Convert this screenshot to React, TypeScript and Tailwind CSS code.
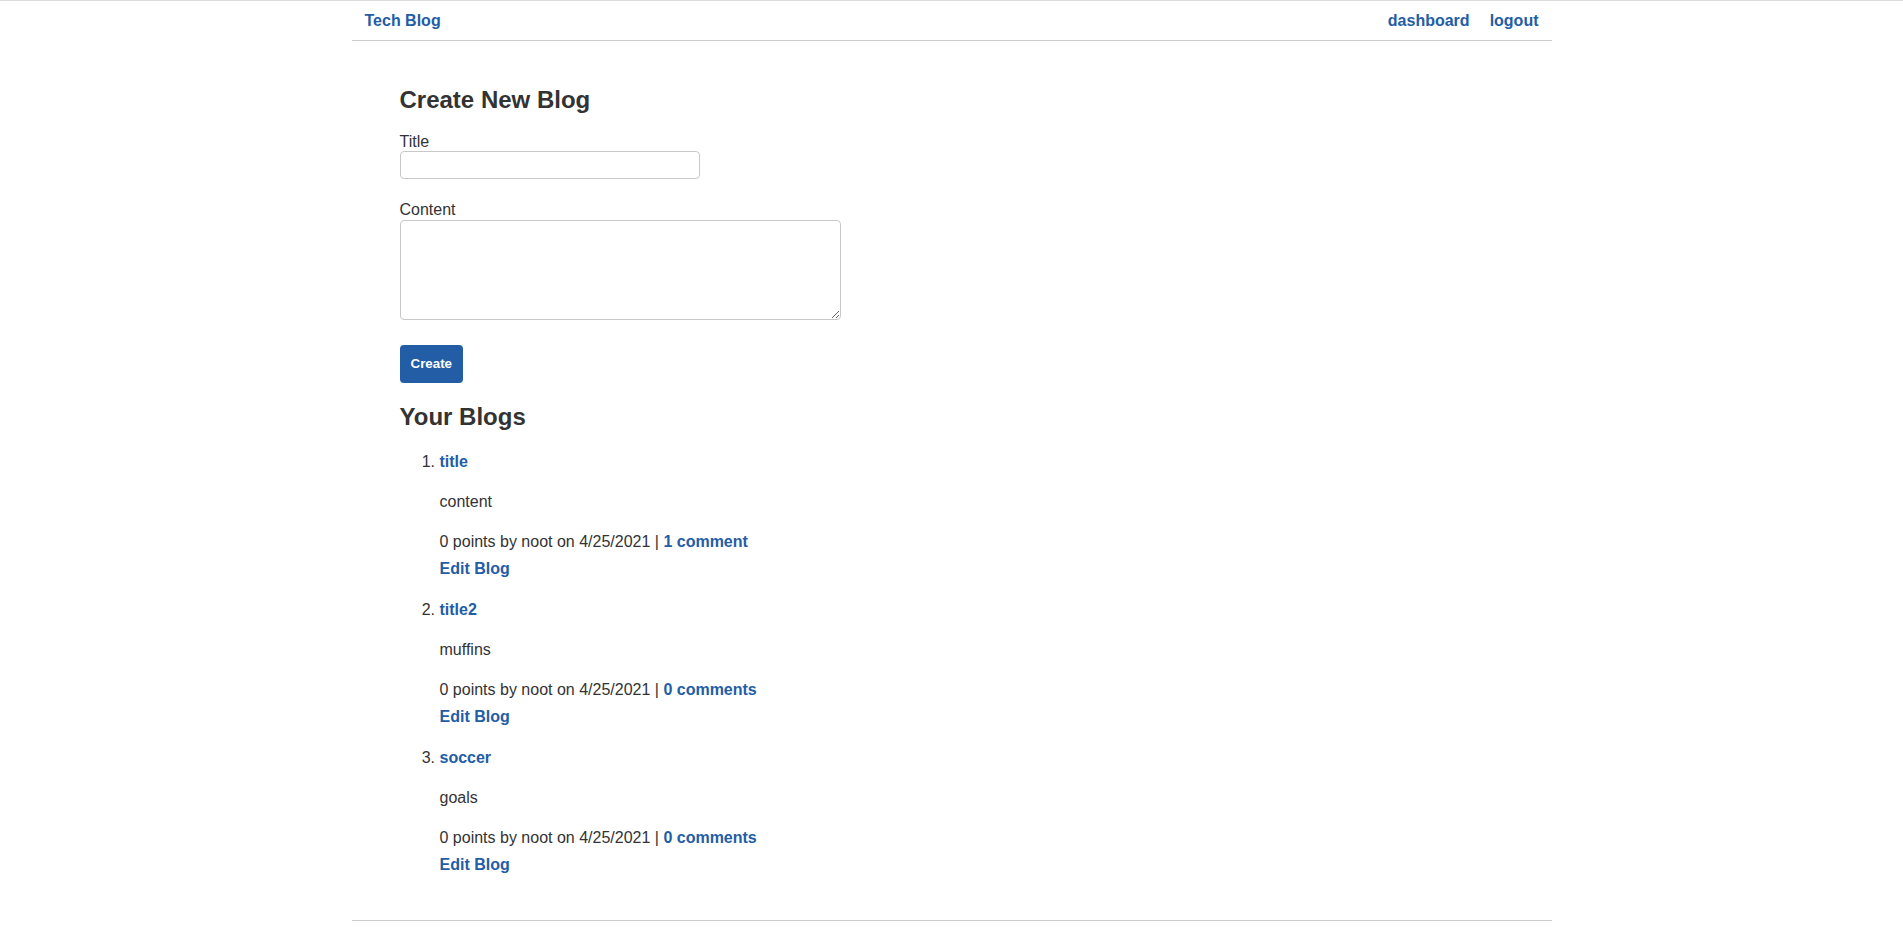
import React from "react";

const blogs = [
  { title: "title", content: "content", comments: "1 comment" },
  { title: "title2", content: "muffins", comments: "0 comments" },
  { title: "soccer", content: "goals", comments: "0 comments" },
];

export default function App() {
  return (
    <div
      className="min-h-[936px] bg-white text-[#333] border-t border-[#dddddd]"
      style={{ fontFamily: '"Liberation Sans", Arial, sans-serif' }}
    >
      <div className="max-w-[1200px] mx-auto">
        <header className="flex justify-between items-start h-[40px] pt-[8px] pl-[13px] pr-[13px] border-b border-[#cccccc]">
          <a className="text-[16px] leading-[24px] font-bold text-[#235da6]">Tech Blog</a>
          <nav className="flex gap-[20px]">
            <a className="text-[16px] leading-[24px] font-bold text-[#235da6]">dashboard</a>
            <a className="text-[16px] leading-[24px] font-bold text-[#235da6]">logout</a>
          </nav>
        </header>

        <main className="px-[48px] pt-[43px]">
          <h2 className="text-[24px] leading-[32px] font-bold">Create New Blog</h2>
          <form className="mt-[17px]" onSubmit={(e) => e.preventDefault()}>
            <label className="block text-[16px] leading-[18.4px]">Title</label>
            <input
              type="text"
              className="block w-[300px] h-[28px] border border-[#c8c8c8] rounded-[4px] px-[4px] text-[16px] outline-none"
            />
            <label className="block mt-[22px] text-[16px] leading-[18.4px]">Content</label>
            <textarea className="block w-[441px] h-[100px] border border-[#c8c8c8] rounded-[4px] px-[4px] text-[16px] outline-none" />
            <button
              type="submit"
              className="mt-[25px] h-[38px] px-[11px] rounded-[4px] bg-[#235da6] text-white text-[13.33px] font-bold"
            >
              Create
            </button>
          </form>

          <h2 className="mt-[18px] text-[24px] leading-[32px] font-bold">Your Blogs</h2>
          <ol className="list-decimal pl-[40px] mt-[17px] text-[16px] leading-[24px]">
            {blogs.map((b) => (
              <li key={b.title} className="mb-[17px]">
                <a className="font-bold text-[#235da6]">{b.title}</a>
                <p className="mt-[16px]">{b.content}</p>
                <p className="mt-[16px]">
                  0 points by noot on 4/25/2021 |{" "}
                  <a className="font-bold text-[#235da6]">{b.comments}</a>
                </p>
                <a className="block mt-[3px] font-bold text-[#235da6]">Edit Blog</a>
              </li>
            ))}
          </ol>
        </main>
        <footer className="mt-[43px] border-t border-[#cccccc] h-[16px]" />
      </div>
    </div>
  );
}
